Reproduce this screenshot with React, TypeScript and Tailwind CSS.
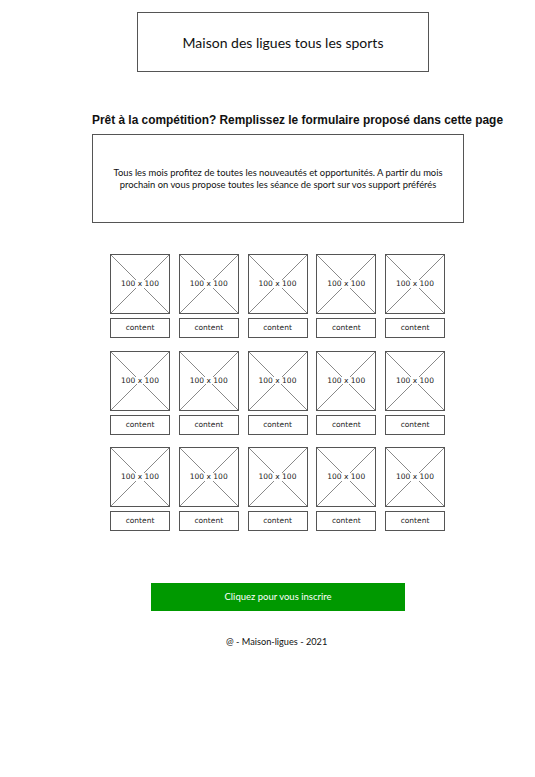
import React from 'react';

const cards = Array.from({ length: 15 });

function Placeholder() {
  return (
    <div className="relative w-[60px] h-[60px] border border-[#555] bg-white">
      <svg className="absolute inset-0 w-full h-full" viewBox="0 0 60 60" preserveAspectRatio="none">
        <line x1="0" y1="0" x2="60" y2="60" stroke="#666" strokeWidth="0.8" />
        <line x1="60" y1="0" x2="0" y2="60" stroke="#666" strokeWidth="0.8" />
      </svg>
      <span className="absolute inset-0 flex items-center justify-center">
        <span className="bg-white px-[1px] text-[7.5px] leading-none text-[#222] font-['Comic_Sans_MS','DejaVu_Sans',sans-serif]">
          100 x 100
        </span>
      </span>
    </div>
  );
}

export default function App() {
  return (
    <div className="w-[535px] min-h-[777px] bg-white flex flex-col font-['Lato','Open_Sans',sans-serif] text-[#111]">
      <div className="ml-[137px] mt-[12px] w-[292px] h-[60px] border border-[#555] flex items-center justify-center">
        <span className="text-[14px]">Maison des ligues tous les sports</span>
      </div>

      <h1 className="ml-[92px] mt-[40px] text-[11.9px] leading-[16px] font-bold font-['Liberation_Sans',Arial,sans-serif] whitespace-nowrap">
        Prêt à la compétition? Remplissez le formulaire proposé dans cette page
      </h1>

      <div className="ml-[92px] mt-[6px] w-[372px] h-[89px] border border-[#555] flex items-center justify-center text-center">
        <p className="text-[9.4px] leading-[12px] whitespace-nowrap">
          Tous les mois profitez de toutes les nouveautés et opportunités. A partir du mois
          <br />
          prochain on vous propose toutes les séance de sport sur vos support préférés
        </p>
      </div>

      <div className="ml-[110px] mt-[31px] grid grid-cols-[repeat(5,60px)] gap-x-[8.75px] gap-y-[12.5px] w-max">
        {cards.map((_, i) => (
          <div key={i} className="flex flex-col gap-[4px]">
            <Placeholder />
            <div className="w-[60px] h-[20px] border border-[#555] flex items-center justify-center">
              <span className="text-[7.5px] leading-none text-[#222] font-['Comic_Sans_MS','DejaVu_Sans',sans-serif]">content</span>
            </div>
          </div>
        ))}
      </div>

      <button className="ml-[151px] mt-[52px] w-[254px] h-[28px] bg-[#009900] text-white text-[9.5px] font-normal flex items-center justify-center">
        Cliquez pour vous inscrire
      </button>

      <p className="mt-[25px] ml-[226px] text-[9.2px] leading-[12px]">@ - Maison-ligues - 2021</p>
    </div>
  );
}
